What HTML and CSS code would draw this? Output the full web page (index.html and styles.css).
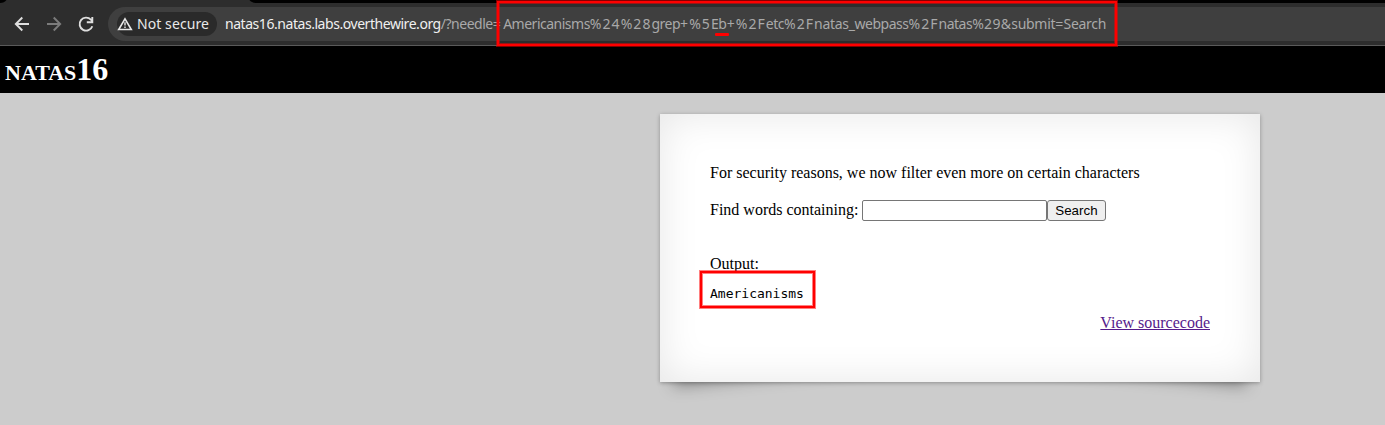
FILE: index.html
```html
<!DOCTYPE html>
<html lang="en">
<head>
<meta charset="utf-8">
<title>natas16</title>
<link rel="stylesheet" href="styles.css">
</head>
<body>
<header class="browser">
  <div class="tabstrip">
    <svg width="257" height="3" viewBox="0 0 257 3"><path d="M0 3C3 3 5 2 6.500 0H249.500C251 2 253 3 257 3Z" fill="#2d2d2d"/></svg>
  </div>
  <div class="toolbar">
    <svg class="nav" width="20" height="20" viewBox="0 0 20 20"><path d="M17 10H4.300M10.300 3.500L3.800 10L10.300 16.500" /></svg>
    <svg class="nav nav-off" width="20" height="20" viewBox="0 0 20 20"><path d="M3 10H15.700M9.700 3.500L16.200 10L9.700 16.500" /></svg>
    <svg class="nav" width="20" height="20" viewBox="0 0 20 20"><path d="M16.300 12.200A6.500 6.500 0 1 1 14.900 5.700L16.500 7.300M16.300 3V8.200H10.800" /></svg>
    <div class="address">
      <div class="chip">
        <svg class="warning" width="16" height="16" viewBox="0 0 16 16"><path d="M8 2.800L14.300 13.500H1.700Z" fill="none" stroke="#e8e8e8" stroke-width="1.600"/><path d="M8 6.300V9.500M8 10.600V12" stroke="#e8e8e8" stroke-width="1.400"/></svg>
        <span class="chip-label">Not secure</span>
      </div>
      <div class="url"><span class="host">natas16.natas.labs.overthewire.org</span><span class="word">/?needle</span><span class="code eq">=</span><span class="word">Americanisms</span><span class="code">%24%28</span><span class="word">grep</span><span class="code">+%5</span><span class="mid">Eb</span><span class="code">+%2F</span><span class="word">etc</span><span class="code">%2F</span><span class="mid">natas_</span><span class="word">webpass</span><span class="code">%2F</span><span class="word">natas</span><span class="code amp">%29&amp;</span><span class="mid">submit</span><span class="amp">=</span><span class="mid">Search</span></div>
    </div>
  </div>
  <div class="mark mark-url"></div>
  <div class="mark-line"></div>
</header>
<h1 class="title">natas16</h1>
<main class="content">
  <p class="intro">For security reasons, we now filter even more on certain characters</p>
  <form class="search">
    <label class="label" for="needle">Find words containing:</label>
    <input class="needle" id="needle" name="needle"><input class="submit" type="submit" value="Search">
  </form>
  <div class="output-label">Output:</div>
  <div class="output"><pre class="result">Americanisms</pre><div class="mark mark-output"></div></div>
  <div class="source"><a class="source-link" href="#">View sourcecode</a></div>
</main>
</body>
</html>
```
FILE: styles.css
```css
* { box-sizing: border-box; }
body {
  margin: 0;
  height: 425px;
  overflow: hidden;
  background: #ccc;
  color: #000;
  font: 16px/18px "Liberation Serif", serif;
}
.browser { position: relative; height: 46px; }
.tabstrip { height: 3px; background: #000; }
.tabstrip svg { display: block; }
.toolbar {
  display: flex;
  align-items: center;
  gap: 12px;
  height: 43px;
  padding: 0 0 1px 12px;
  background: #2d2d2d;
  border-bottom: 1px solid #5a5a5a;
}
.nav { flex: none; fill: none; stroke: #dedede; stroke-width: 1.9; }
.nav-off { stroke: #7b7b7b; }
.address {
  display: flex;
  align-items: center;
  flex: 1;
  height: 34px;
  padding-left: 9px;
  background: #3f3f3f;
  border-radius: 17px 0 0 17px;
  font: 14px/20px "Noto Sans", sans-serif;
  color: #a9a9a9;
  white-space: nowrap;
}
.chip {
  display: flex;
  align-items: center;
  gap: 4px;
  width: 100px;
  height: 24px;
  margin-right: 8px;
  border-radius: 12px;
  background: #2a2a2a;
  color: #e8e8e8;
}
.chip-label { letter-spacing: .08px; }
.warning { flex: none; }
.host { color: #f0f0f0; letter-spacing: -.45px; }
.word { letter-spacing: -.5px; }
.mid { letter-spacing: -.3px; }
.code { letter-spacing: 1.05px; }
.eq { letter-spacing: 2.5px; }
.amp { letter-spacing: .3px; }
.mark {
  position: absolute;
  z-index: 1;
  border: 2px solid #f00;
  box-shadow: 0 0 0 1px rgba(255, 0, 0, .5), 0 0 0 1px rgba(255, 0, 0, .5) inset;
}
.mark-url { left: 497px; top: 1px; width: 620px; height: 45px; }
.mark-line {
  position: absolute;
  left: 715px;
  top: 33px;
  width: 14px;
  height: 3px;
  border-radius: 1px;
  background: #f00;
}
.title {
  height: 47px;
  margin: 0;
  padding: 5px;
  background: #000;
  color: #fff;
  font-size: 32px;
  line-height: 37px;
  font-variant: small-caps;
}
.content {
  position: relative;
  width: 600px;
  height: 268px;
  margin: 21px 0 0 660px;
  padding: 50px;
  background: #fff;
  box-shadow: 0 1px 4px rgba(0, 0, 0, .3), 0 0 40px rgba(0, 0, 0, .1) inset;
}
.content::before,
.content::after {
  content: "";
  position: absolute;
  z-index: -1;
  bottom: 19px;
  width: 50%;
  height: 20%;
  max-width: 300px;
  box-shadow: 0 8px 16px rgba(0, 0, 0, .35);
}
.content::before { left: 22px; transform: skew(-15deg) rotate(-6deg); }
.content::after { right: 22px; transform: skew(15deg) rotate(6deg); }
.intro { margin: 0 0 18px; }
.search { height: 21px; margin: 0 0 34px; line-height: 21px; white-space: nowrap; }
.label { display: inline-block; line-height: 19px; vertical-align: top; }
.needle, .submit {
  height: 21px;
  margin: 0;
  border: 1px solid #767676;
  border-radius: 2px;
  font: 13.333px "Liberation Sans", sans-serif;
  vertical-align: top;
}
.needle { width: 185px; background: #fff; }
.submit { width: 59px; padding: 0 1px 0 0; border-radius: 3px; background: #efefef; color: #000; }
.output-label { height: 18px; }
.output { position: relative; margin-top: 13px; height: 15px; }
.result { margin: 0; font: 13px/15px "DejaVu Sans Mono", monospace; }
.mark-output { left: -10px; top: -15px; width: 115px; height: 37px; }
.source { margin-top: 13px; text-align: right; }
.source-link { color: #551a8b; }
```
